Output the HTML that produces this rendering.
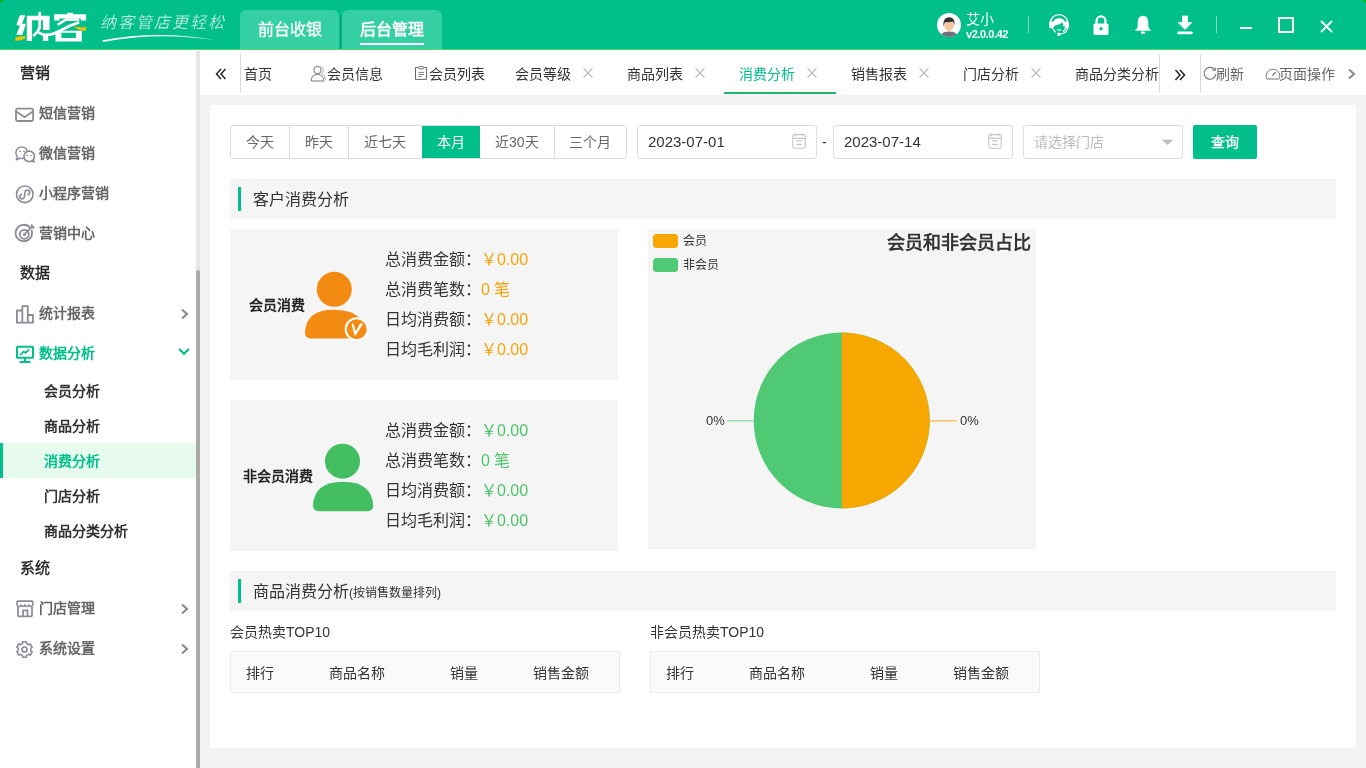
<!DOCTYPE html>
<html lang="zh-CN">
<head>
<meta charset="utf-8">
<style>
*{margin:0;padding:0;box-sizing:border-box}
html,body{width:1366px;height:768px;overflow:hidden;background:#fff;font-family:"Liberation Sans",sans-serif;color:#333}
.a{position:absolute;white-space:nowrap}
#hd{position:absolute;left:0;top:0;width:1366px;height:50px;background:#00bf8a}
#hd .line{position:absolute;left:0;top:49px;width:1366px;height:1px;background:#48dc72}
.htab{position:absolute;top:10px;height:40px;background:#34d0a3;border-radius:6px 6px 0 0;color:#fff;font-size:16px;line-height:40px;text-align:center}
#sb{position:absolute;left:0;top:50px;width:196px;height:718px;background:#fff}
#track{position:absolute;left:196px;top:51px;width:4px;height:717px;background:#e6e6e6}
#thumb{position:absolute;left:196px;top:270px;width:4px;height:498px;background:#ababab;border-radius:2px 2px 0 0}
.grp{position:absolute;left:20px;font-size:15px;font-weight:normal;color:#222;line-height:20px;-webkit-text-stroke:0.35px #222}
.mi{position:absolute;left:39px;font-size:14px;font-weight:bold;color:#666;line-height:20px}
.si{position:absolute;left:44px;font-size:14px;font-weight:bold;color:#333;line-height:20px}
.ic{position:absolute;left:14px}
.chev{position:absolute;left:178px}
#tb{position:absolute;left:200px;top:50px;width:1166px;height:45px;background:#fff}
.tt{position:absolute;top:2px;font-size:14px;line-height:45px;color:#333}
.tx{position:absolute;top:17px}
#ct{position:absolute;left:200px;top:95px;width:1166px;height:673px;background:#f4f4f4}
#panel{position:absolute;left:210px;top:105px;width:1146px;height:643px;background:#fff}
.btng{position:absolute;left:230px;top:125px;height:34px;border:1px solid #dcdcdc;border-radius:3px;display:flex;overflow:hidden}
.btng div{height:32px;line-height:32px;font-size:14px;color:#666;padding:0 15px;border-left:1px solid #dcdcdc}
.btng div:first-child{border-left:none}
.btng div.on{background:#00bf8a;color:#fff;border-left-color:#00bf8a}
.inp{position:absolute;top:125px;height:34px;border:1px solid #dcdcdc;border-radius:3px;background:#fff;font-size:14px;line-height:32px;color:#333;padding-left:11px}
.sec{position:absolute;left:230px;width:1106px;height:40px;background:#f5f5f5}
.sec .bar{position:absolute;left:8px;top:8px;width:3px;height:24px;background:#00bf8a}
.sec .t{position:absolute;left:23px;top:1px;line-height:40px;font-size:16px;color:#333}
.card{position:absolute;background:#f5f5f5}
.lab{position:absolute;left:155px;margin-top:1px;font-size:16px;color:#333;line-height:30px}
.val{color:#f5a40a}
.valg{color:#4cc56a}
.tbl{position:absolute;top:651px;width:390px;height:42px;border:1px solid #ebebeb;background:#fafafa;font-size:14px;color:#333;line-height:40px}
.tbl span{position:absolute;top:1px}
</style>
</head>
<body><div id="root" style="position:absolute;left:0;top:0;width:1366px;height:768px;will-change:transform">
<!-- HEADER -->
<div id="hd">
  <svg class="a" style="left:0;top:0" width="5" height="5"><path d="M0 0 H4 Q1 1 0 4Z" fill="#00b400"/></svg><svg class="a" style="left:1361px;top:0" width="5" height="5"><path d="M5 0 H1 Q4 1 5 4Z" fill="#00b400"/></svg>
  <svg class="a" style="left:10px;top:5px" width="90" height="45" viewBox="0 0 1366 683">
    <path d="M150 155 L232 155 L182 285 L242 285 L188 452 L95 452 L150 318 L95 300 Z" fill="#fff"/>
    <path d="M255 165 H600 V380 H500 V232 H335 V545 H255 Z" fill="#fff"/>
    <rect x="500" y="470" width="80" height="75" fill="#fff"/>
    <rect x="430" y="105" width="42" height="260" fill="#fff"/>
    <path d="M455 330 Q420 420 350 470" stroke="#fff" stroke-width="38" fill="none"/>
    <path d="M430 415 Q560 500 760 390 Q900 310 1050 262" stroke="#fff" stroke-width="42" fill="none"/>
    <path d="M670 140 H1155 V235 H1075 V205 H752 V235 H670 Z" fill="#fff"/>
    <rect x="870" y="118" width="90" height="40" fill="#fff"/>
    <path d="M722 300 L850 222 H1050" stroke="#fff" stroke-width="38" fill="none"/>
    <path d="M690 390 H1090 V555 H690 Z M780 422 V500 H1000 V422 Z" fill="#fff" fill-rule="evenodd"/>
    <path d="M80 492 Q150 468 235 475 L228 512 Q150 538 82 546 Z" fill="#f5c000"/>
    <path d="M965 318 Q1060 352 1157 333 L1148 392 Q1050 398 965 318 Z" fill="#f5c000"/>
  </svg>
  <div class="a" style="left:100px;top:12px;font-family:'Liberation Serif',serif;font-size:16px;color:#fff;line-height:22px;letter-spacing:2px;font-style:italic;-webkit-text-stroke:0.35px #00bf8a">纳客管店更轻松</div>
  <svg class="a" style="left:95px;top:28px" width="135" height="18" viewBox="95 28 135 18"><path d="M102.5 40.2 Q160 29.4 219.5 40.9 Q160 31.2 102.8 41.9 Z" fill="#fff"/></svg>
  <div class="htab" style="left:240px;width:99px;-webkit-text-stroke:0.3px #fff">前台收银</div>
  <div class="a" style="left:339.5px;top:15px;width:2.5px;height:35px;background:#06a87c;filter:blur(0.4px)"></div>
  <div class="htab" style="left:342px;width:100px;font-weight:bold">后台管理<div style="position:absolute;left:18px;top:33px;width:64px;height:2px;background:#fff"></div></div>
  <div class="line"></div>
  <!-- avatar -->
  <svg class="a" style="left:937px;top:13px" width="24" height="24" viewBox="0 0 24 24">
    <circle cx="12" cy="12" r="12" fill="#fff"/>
    <clipPath id="cp"><circle cx="12" cy="12" r="12"/></clipPath>
    <g clip-path="url(#cp)">
      <path d="M2.5 24.5 Q3.6 18.4 12 18.4 Q20.4 18.4 21.5 24.5Z" fill="#70707f"/>
      <rect x="10.4" y="15.6" width="3.2" height="3.2" fill="#f3c39c"/>
      <ellipse cx="12" cy="12.4" rx="4.8" ry="5" fill="#f6c79e"/>
      <path d="M6.6 13.6 Q5.4 4.4 12 4.2 Q18.6 4.4 17.4 12.6 Q17 9.4 15.6 8.6 Q12 9.8 8.2 8.9 Q7 10.4 6.6 13.6Z" fill="#333"/>
    </g>
  </svg>
  <div class="a" style="left:966px;top:10px;font-size:14px;color:#fff;line-height:18px">艾小</div>
  <div class="a" style="left:966px;top:27px;font-size:11px;font-weight:bold;color:#fff;line-height:14px;letter-spacing:-0.45px">v2.0.0.42</div>
  <div class="a" style="left:1028px;top:16px;width:1px;height:17px;background:rgba(255,255,255,.5)"></div>
  <div class="a" style="left:1216px;top:16px;width:1px;height:17px;background:rgba(255,255,255,.5)"></div>
  <svg class="a" style="left:1044px;top:10px" width="30" height="30" viewBox="1044 10 30 30">
    <path d="M1050.1 23.5 A8.9 8.9 0 0 1 1067.9 23.5" stroke="#fff" stroke-width="1.3" fill="none"/>
    <rect x="1049.2" y="21.6" width="4" height="6.6" rx="1.2" fill="#fff"/>
    <rect x="1065" y="21.6" width="4" height="6.6" rx="1.2" fill="#fff"/>
    <path d="M1052.6 26.5 Q1052.2 18.2 1059 18.3 Q1066 18.2 1065.6 26.5 L1063.4 26.5 Q1063.2 23.5 1062 22.2 Q1060.5 24.6 1055.5 25.2 Q1054 25.8 1054.2 27 Z" fill="#fff"/>
    <path d="M1052.6 27.5 Q1053.6 31 1056 32.2 M1065.6 27.5 Q1064.6 30.8 1063 31.6" stroke="#fff" stroke-width="1.2" fill="none"/>
    <path d="M1057.3 29.5 Q1059.2 30.7 1061.2 29.5" stroke="#fff" stroke-width="1.1" fill="none"/>
    <path d="M1067.6 28 Q1066.8 33.6 1059.5 34.2" stroke="#fff" stroke-width="1.3" fill="none"/>
    <circle cx="1058.8" cy="34.2" r="1.7" fill="#fff"/>
  </svg>
  <svg class="a" style="left:1093px;top:15px" width="16" height="20" viewBox="0 0 16 20">
    <path d="M3.6 9 V5.8 A4.4 4.4 0 0 1 12.4 5.8 V9" stroke="#fff" stroke-width="2.3" fill="none"/>
    <rect x="0.5" y="8.5" width="15" height="11.5" rx="1.5" fill="#fff"/>
    <circle cx="8" cy="13.8" r="1.7" fill="#00bf8a"/>
  </svg>
  <svg class="a" style="left:1135px;top:15px" width="16" height="19" viewBox="0 0 16 19">
    <path d="M8 0.8 Q13 0.8 13.2 7 L13.5 12 Q14 14 15.8 15 L15.8 15.8 L0.2 15.8 L0.2 15 Q2 14 2.5 12 L2.8 7 Q3 0.8 8 0.8Z" fill="#fff"/>
    <rect x="5.8" y="16.5" width="4.4" height="2.2" rx="1" fill="#fff"/>
  </svg>
  <svg class="a" style="left:1177px;top:15px" width="16" height="20" viewBox="0 0 16 20">
    <path d="M5.5 1 H10.5 V7.5 H14.8 L8 14.5 L1.2 7.5 H5.5Z" fill="#fff" stroke="#fff" stroke-width="0.8" stroke-linejoin="round"/>
    <rect x="0.3" y="16.4" width="15.4" height="2.8" rx="1.2" fill="#fff"/>
  </svg>
  <div class="a" style="left:1240px;top:27px;width:12px;height:2px;background:#fff"></div>
  <div class="a" style="left:1278px;top:17px;width:16px;height:16px;border:2px solid #fdfde8"></div>
  <svg class="a" style="left:1320px;top:20px" width="13" height="13" viewBox="0 0 13 13"><path d="M1 1 L12 12 M12 1 L1 12" stroke="#fff" stroke-width="1.8"/></svg>
</div>


<!-- SIDEBAR -->
<div id="sb"></div>
<div id="track"></div>
<div id="thumb"></div>
<div class="grp" style="top:63px">营销</div>
<div class="mi" style="top:103px">短信营销</div>
<div class="mi" style="top:143px">微信营销</div>
<div class="mi" style="top:183px">小程序营销</div>
<div class="mi" style="top:223px">营销中心</div>
<div class="grp" style="top:263px">数据</div>
<div class="mi" style="top:303px">统计报表</div>
<div class="mi" style="top:343px;color:#00bf8a">数据分析</div>
<div class="si" style="top:381px">会员分析</div>
<div class="si" style="top:416px">商品分析</div>
<div class="a" style="left:0;top:443px;width:196px;height:35px;background:#e6fbee"></div>
<div class="a" style="left:0;top:443px;width:3px;height:35px;background:#00bf8a"></div>
<div class="si" style="top:451px;color:#00bf8a">消费分析</div>
<div class="si" style="top:486px">门店分析</div>
<div class="si" style="top:521px">商品分类分析</div>
<div class="grp" style="top:558px">系统</div>
<div class="mi" style="top:598px">门店管理</div>
<div class="mi" style="top:638px">系统设置</div>


<svg class="a" style="left:12px;top:104px" width="26" height="22" viewBox="12 104 26 22"><rect x="16" y="108.6" width="17.1" height="12.4" rx="1.5" stroke="#8b8b98" stroke-width="1.8" fill="none"/><path d="M16.3 111.6 L24.6 117.2 L32.8 111.6" stroke="#8b8b98" stroke-width="1.8" fill="none" stroke-linejoin="round"/></svg>
<svg class="a" style="left:12px;top:142px" width="26" height="24" viewBox="12 142 26 24"><circle cx="21.7" cy="152.7" r="5.75" stroke="#8b8b98" stroke-width="1.6" fill="#fff"/><path d="M17.6 156.6 L16.2 159.9 L20.4 158.3" stroke="#8b8b98" stroke-width="1.4" fill="#fff" stroke-linejoin="round"/><circle cx="21.7" cy="152.7" r="4.95" fill="#fff"/><path d="M19.3 151.4 H20.9 M23.2 151.4 H24.8" stroke="#8b8b98" stroke-width="1.4"/><path d="M32.6 159.8 L34.6 161.9 L30.8 161.2" stroke="#8b8b98" stroke-width="1.4" fill="#fff" stroke-linejoin="round"/><circle cx="29.2" cy="156.4" r="5.25" stroke="#8b8b98" stroke-width="1.6" fill="#fff"/><path d="M26.6 155.6 H28 M30.4 155.6 H31.8" stroke="#8b8b98" stroke-width="1.4"/></svg>
<svg class="a" style="left:12px;top:182px" width="26" height="26" viewBox="12 182 26 26"><circle cx="24.8" cy="194.3" r="8.3" stroke="#8b8b98" stroke-width="1.6" fill="none"/><path d="M22.1 194.2 A2.3 2.3 0 1 0 24.4 196.5 L25.1 192.3 A2.3 2.3 0 1 1 27.4 194.6" stroke="#8b8b98" stroke-width="1.6" fill="none"/></svg>
<svg class="a" style="left:12px;top:222px" width="26" height="24" viewBox="12 222 26 24"><path d="M30.2 227.8 A8.2 8.2 0 1 0 31.4 229.8" stroke="#8b8b98" stroke-width="1.8" fill="none"/><circle cx="24.3" cy="234.3" r="4.5" stroke="#8b8b98" stroke-width="1.8" fill="none"/><circle cx="24.3" cy="234.4" r="1.5" fill="#8b8b98"/><path d="M24.3 234.4 L31.6 227.1" stroke="#8b8b98" stroke-width="1.8"/><path d="M31 225.2 L32 224.6 L32.8 226.4 L34.4 227 L33.6 228.2 L31.6 227.6 Z" fill="#8b8b98" stroke="#8b8b98" stroke-width="1"/></svg>
<svg class="a" style="left:12px;top:302px" width="26" height="24" viewBox="12 302 26 24"><path d="M16.9 322.7 V310.5 H22.3 V306.1 H27.8 V315 H33 V322.7 Z M22.3 310.5 V322.7 M27.8 315 V322.7" stroke="#8b8b98" stroke-width="1.8" fill="none" stroke-linejoin="round"/></svg>
<svg class="a" style="left:12px;top:342px" width="26" height="24" viewBox="12 342 26 24"><rect x="17" y="346.8" width="16" height="11" rx="0.6" stroke="#00bf8a" stroke-width="2" fill="none"/><path d="M25 358 V361.6 M20.3 362.1 H29.7" stroke="#00bf8a" stroke-width="2" stroke-linecap="round"/><path d="M20.6 354.6 L23.6 351.5 L25.6 352.8 L28.6 349.8" stroke="#00bf8a" stroke-width="1.7" fill="none" stroke-linecap="round"/></svg>
<svg class="a" style="left:12px;top:596px" width="26" height="26" viewBox="12 596 26 26"><path d="M17 604.8 V602.2 Q17 601.1 18.1 601.1 H31.8 Q32.9 601.1 32.9 602.2 V604.8 A1.99 1.7 0 0 1 28.93 604.8 A1.99 1.7 0 0 1 24.95 604.8 A1.99 1.7 0 0 1 20.98 604.8 A1.99 1.7 0 0 1 17 604.8 Z" stroke="#8b8b98" stroke-width="1.6" fill="none" stroke-linejoin="round"/><path d="M18 606.6 V615.6 Q18 616.4 18.8 616.4 H31.2 Q32 616.4 32 615.6 V606.6" stroke="#8b8b98" stroke-width="1.7" fill="none" stroke-linejoin="round"/><path d="M23.1 616.2 V610.4 H27.5 V616.2" stroke="#8b8b98" stroke-width="1.7" fill="none"/></svg>
<svg class="a" style="left:12px;top:638px" width="26" height="24" viewBox="12 638 26 24"><path d="M22.56 641.74 L26.44 641.74 L26.48 643.41 L28.78 644.74 L30.25 643.94 L32.19 647.29 L30.76 648.17 L30.76 650.83 L32.19 651.71 L30.25 655.06 L28.78 654.26 L26.48 655.59 L26.44 657.26 L22.56 657.26 L22.52 655.59 L20.22 654.26 L18.75 655.06 L16.81 651.71 L18.24 650.83 L18.24 648.17 L16.81 647.29 L18.75 643.94 L20.22 644.74 L22.52 643.41Z" stroke="#8b8b98" stroke-width="1.6" fill="none" stroke-linejoin="round"/><circle cx="24.5" cy="649.5" r="2.5" stroke="#8b8b98" stroke-width="1.7" fill="none"/></svg>
<svg class="a" style="left:180px;top:308px" width="9" height="12" viewBox="0 0 9 12"><path d="M2 1.5 L7 6 L2 10.5" stroke="#8b8b98" stroke-width="2.2" fill="none"/></svg>
<svg class="a" style="left:178px;top:347px" width="12" height="9" viewBox="0 0 12 9"><path d="M1.2 2 L6 6.8 L10.8 2" stroke="#00bf8a" stroke-width="2.2" fill="none"/></svg>
<svg class="a" style="left:180px;top:603px" width="9" height="12" viewBox="0 0 9 12"><path d="M2 1.5 L7 6 L2 10.5" stroke="#8b8b98" stroke-width="2.2" fill="none"/></svg>
<svg class="a" style="left:180px;top:643px" width="9" height="12" viewBox="0 0 9 12"><path d="M2 1.5 L7 6 L2 10.5" stroke="#8b8b98" stroke-width="2.2" fill="none"/></svg>

<!-- TABBAR -->
<div id="tb"></div>
<svg class="a" style="left:215px;top:68px" width="12" height="12" viewBox="0 0 12 12"><path d="M6 1 L1.5 6 L6 11 M10.5 1 L6 6 L10.5 11" stroke="#222" stroke-width="1.5" fill="none"/></svg>
<div class="a" style="left:240px;top:53px;width:1px;height:40px;background:#d9d9d9"></div>
<div class="a" style="left:241px;top:50px;width:918px;height:45px;overflow:hidden">
  <div class="tt" style="left:3px">首页</div>
  <svg class="a" style="left:69px;top:14px" width="18" height="18" viewBox="69 14 18 18"><circle cx="76.5" cy="20" r="3.7" stroke="#777" stroke-width="1" fill="none"/><path d="M70.2 31 Q70.4 24.6 76.5 24.4 Q82.6 24.6 82.8 31 Z" stroke="#777" stroke-width="1" fill="none" stroke-linejoin="round"/><path d="M80 16.3 Q82.6 17.4 82.2 21.2 Q81.6 23 80.6 23.6 Q84.4 25 84.6 29.8" stroke="#aaa" stroke-width="0.9" fill="none"/></svg>
  <div class="tt" style="left:86px">会员信息</div>
  <svg class="a" style="left:172px;top:15px" width="16" height="17" viewBox="172 15 16 17"><path d="M174.5 17.4 V29.4 H185.6 V17.4 H182.8 M177.3 17.4 H174.5" stroke="#666" stroke-width="1" fill="none"/><path d="M177.3 17.4 L178.3 16.4 H182 L182.8 17.4 L182.2 18.8 H178 Z" stroke="#666" stroke-width="0.9" fill="none" stroke-linejoin="round"/><path d="M177.3 22.4 H183 M177.3 24.5 H183 M177.3 26.6 H180.5" stroke="#777" stroke-width="0.9"/></svg>
  <div class="tt" style="left:188px">会员列表</div>
  <div class="tt" style="left:274px">会员等级</div>
  <div class="tt" style="left:386px">商品列表</div>
  <div class="tt" style="left:498px;color:#00bf8a">消费分析</div>
  <div class="a" style="left:483px;top:42px;width:112px;height:2px;background:#1cb76a"></div>
  <div class="tt" style="left:610px">销售报表</div>
  <div class="tt" style="left:722px">门店分析</div>
  <div class="tt" style="left:834px">商品分类分析</div>
  <svg class="a" style="left:342px;top:18px" width="10" height="10" viewBox="0 0 10 10"><path d="M0.5 0.5 L9.5 9.5 M9.5 0.5 L0.5 9.5" stroke="#bbb" stroke-width="1.1"/></svg>
<svg class="a" style="left:454px;top:18px" width="10" height="10" viewBox="0 0 10 10"><path d="M0.5 0.5 L9.5 9.5 M9.5 0.5 L0.5 9.5" stroke="#bbb" stroke-width="1.1"/></svg>
<svg class="a" style="left:566px;top:18px" width="10" height="10" viewBox="0 0 10 10"><path d="M0.5 0.5 L9.5 9.5 M9.5 0.5 L0.5 9.5" stroke="#bbb" stroke-width="1.1"/></svg>
<svg class="a" style="left:678px;top:18px" width="10" height="10" viewBox="0 0 10 10"><path d="M0.5 0.5 L9.5 9.5 M9.5 0.5 L0.5 9.5" stroke="#bbb" stroke-width="1.1"/></svg>
<svg class="a" style="left:790px;top:18px" width="10" height="10" viewBox="0 0 10 10"><path d="M0.5 0.5 L9.5 9.5 M9.5 0.5 L0.5 9.5" stroke="#bbb" stroke-width="1.1"/></svg>

</div>
<div class="a" style="left:1159px;top:54px;width:1px;height:39px;background:#d9d9d9"></div>
<svg class="a" style="left:1174px;top:69px" width="12" height="12" viewBox="0 0 12 12"><path d="M1.5 1 L6 6 L1.5 11 M6 1 L10.5 6 L6 11" stroke="#222" stroke-width="1.5" fill="none"/></svg>
<div class="a" style="left:1200px;top:54px;width:1px;height:39px;background:#d9d9d9"></div>
<svg class="a" style="left:1202px;top:66px" width="16" height="16" viewBox="1202 66 16 16"><path d="M1214.6 69.6 A5.9 5.9 0 1 0 1215.9 73.8" stroke="#777" stroke-width="1.1" fill="none"/><path d="M1212 70.3 L1215.3 70.3 L1215.3 67.4" stroke="#777" stroke-width="1.1" fill="none"/></svg>
<div class="tt" style="left:1216px;top:52px;color:#666">刷新</div>
<svg class="a" style="left:1264px;top:66px" width="18" height="16" viewBox="1264 66 18 16"><path d="M1266.9 79 A6.8 6.8 0 1 1 1279.1 79 Z" stroke="#777" stroke-width="1" fill="none"/><path d="M1266.9 79 H1279.1" stroke="#bbb" stroke-width="1.2"/><path d="M1272.3 75.6 L1275.6 72.2" stroke="#666" stroke-width="1.1"/></svg>
<div class="tt" style="left:1279px;top:52px;color:#666">页面操作</div>
<svg class="a" style="left:1347px;top:68px" width="9" height="12" viewBox="0 0 9 12"><path d="M2 1.5 L7 6 L2 10.5" stroke="#888" stroke-width="2" fill="none"/></svg>


<!-- CONTENT -->
<div id="ct"></div>
<div id="panel"></div>

<div class="a" style="left:230px;top:125px;width:397px;height:34px;border:1px solid #dcdcdc;border-radius:3px;background:#fff"></div>
<div class="a" style="left:231.0px;top:126px;width:58.3px;height:32px;line-height:32px;text-align:center;font-size:14px;color:#666;">今天</div>
<div class="a" style="left:289.3px;top:126px;width:59.0px;height:32px;line-height:32px;text-align:center;font-size:14px;color:#666;">昨天</div>
<div class="a" style="left:289.3px;top:126px;width:1px;height:32px;background:#dcdcdc"></div>
<div class="a" style="left:348.3px;top:126px;width:73.3px;height:32px;line-height:32px;text-align:center;font-size:14px;color:#666;">近七天</div>
<div class="a" style="left:348.3px;top:126px;width:1px;height:32px;background:#dcdcdc"></div>
<div class="a" style="left:421.6px;top:126px;width:58.4px;height:32px;line-height:32px;text-align:center;font-size:14px;background:#00bf8a;color:#fff;">本月</div>
<div class="a" style="left:480.0px;top:126px;width:73.6px;height:32px;line-height:32px;text-align:center;font-size:14px;color:#666;">近30天</div>
<div class="a" style="left:553.6px;top:126px;width:72.7px;height:32px;line-height:32px;text-align:center;font-size:14px;color:#666;">三个月</div>
<div class="a" style="left:553.6px;top:126px;width:1px;height:32px;background:#dcdcdc"></div>

<div class="inp" style="left:637px;width:180px;font-size:15px;padding-left:10px">2023-07-01</div>
<div class="a" style="left:822px;top:132px;font-size:14px;line-height:20px;color:#333">-</div>
<div class="inp" style="left:833px;width:180px;font-size:15px;padding-left:10px">2023-07-14</div>
<div class="inp" style="left:1023px;width:160px;color:#bbb;padding-left:10px">请选择门店</div>
<svg class="a" style="left:790.2px;top:131px" width="18" height="20" viewBox="790 131 18 20" ><g stroke="#c8c8c8" fill="none" stroke-width="1.1"><rect x="792.8" y="134.6" width="12.4" height="13.6" rx="1.2"/><path d="M792.8 138.4 H805.2 M795.4 133.2 V136.2 M802.5 133.2 V136.2"/><path d="M796.2 140.9 H801.8 M796.2 144.5 H801.8" stroke-width="1.3"/></g></svg>
<svg class="a" style="left:985.8px;top:131px" width="18" height="20" viewBox="790 131 18 20" ><g stroke="#c8c8c8" fill="none" stroke-width="1.1"><rect x="792.8" y="134.6" width="12.4" height="13.6" rx="1.2"/><path d="M792.8 138.4 H805.2 M795.4 133.2 V136.2 M802.5 133.2 V136.2"/><path d="M796.2 140.9 H801.8 M796.2 144.5 H801.8" stroke-width="1.3"/></g></svg>
<svg class="a" style="left:1161px;top:139px" width="13" height="7" viewBox="0 0 13 7"><path d="M0.7 0.7 H12.3 L6.5 5.9 Z" fill="#bdbdbd"/></svg>
<div class="a" style="left:1193px;top:125px;width:64px;height:34px;background:#00bf8a;border-radius:2px;color:#fff;font-size:14px;line-height:34px;text-align:center;-webkit-text-stroke:0.3px #fff">查询</div>

<div class="sec" style="top:179px"><div class="bar"></div><div class="t">客户消费分析</div></div>

<div class="card" style="left:230px;top:229px;width:388px;height:151px">
  <div class="a" style="left:19px;top:66px;font-size:14px;font-weight:bold;color:#222;line-height:20px">会员消费</div>
  <div class="lab" style="top:15px">总消费金额：<span class="val">￥0.00</span></div>
  <div class="lab" style="top:45px">总消费笔数：<span class="val">0 笔</span></div>
  <div class="lab" style="top:75px">日均消费额：<span class="val">￥0.00</span></div>
  <div class="lab" style="top:105px">日均毛利润：<span class="val">￥0.00</span></div>
</div>
<div class="card" style="left:230px;top:400px;width:388px;height:151px">
  <div class="a" style="left:13px;top:66px;font-size:14px;font-weight:bold;color:#222;line-height:20px">非会员消费</div>
  <div class="lab" style="top:15px">总消费金额：<span class="valg">￥0.00</span></div>
  <div class="lab" style="top:45px">总消费笔数：<span class="valg">0 笔</span></div>
  <div class="lab" style="top:75px">日均消费额：<span class="valg">￥0.00</span></div>
  <div class="lab" style="top:105px">日均毛利润：<span class="valg">￥0.00</span></div>
</div>
<div class="card" style="left:648px;top:229px;width:388px;height:320px"></div>


<svg class="a" style="left:300px;top:268px" width="70" height="75" viewBox="300 268 70 75">
  <circle cx="334.3" cy="289.3" r="17.5" fill="#f38b12"/>
  <path d="M305 333 Q306 309.8 333 309.8 Q354 309.8 361 320 L352 338.5 L311 338.5 Q305 338 305 333Z" fill="#f38b12"/>
  <circle cx="356.7" cy="329.2" r="12" fill="#fff"/>
  <circle cx="356.7" cy="329.2" r="10" fill="#f38b12"/>
  <path d="M351.6 324 Q352.6 323.2 353.6 324 L355.9 331.2 L360 323.4 H363.2 L355.8 335.3 H354.4 Z" fill="#fff"/>
</svg>
<svg class="a" style="left:310px;top:440px" width="70" height="75" viewBox="310 440 70 75">
  <circle cx="342.5" cy="461.2" r="17.5" fill="#42be60"/>
  <path d="M313 505.5 Q314 482 343 481.8 Q372 482 373.2 505.5 Q373.2 511.2 367 511.2 L319 511.2 Q313 511.2 313 505.5Z" fill="#42be60"/>
</svg>
<svg class="a" style="left:648px;top:229px" width="388" height="320" viewBox="648 229 388 320">
  <circle cx="841.7" cy="420.5" r="88" fill="#50c974"/>
  <path d="M841.7 332.5 A88 88 0 0 1 841.7 508.5 Z" fill="#f6a800"/>
  <path d="M929.7 420.8 H957" stroke="#f6c56a" stroke-width="1.5"/>
  <path d="M727 420.8 H753.7" stroke="#93dcaa" stroke-width="1.5"/>
  <rect x="653" y="234" width="25" height="14" rx="3.5" fill="#f6a800"/>
  <rect x="653" y="258" width="25" height="14" rx="3.5" fill="#50c974"/>
</svg>
<div class="a" style="left:683px;top:233px;font-size:12px;line-height:16px;color:#333">会员</div>
<div class="a" style="left:683px;top:257px;font-size:12px;line-height:16px;color:#333">非会员</div>
<div class="a" style="left:887px;top:232px;font-size:18px;font-weight:bold;line-height:22px;color:#333">会员和非会员占比</div>
<div class="a" style="left:706px;top:412px;font-size:13px;line-height:18px;color:#333">0%</div>
<div class="a" style="left:960px;top:412px;font-size:13px;line-height:18px;color:#333">0%</div>

<div class="sec" style="top:571px"><div class="bar"></div><div class="t">商品消费分析<span style="font-size:12px">(按销售数量排列)</span></div></div>
<div class="a" style="left:230px;top:622px;font-size:14px;line-height:20px;color:#333">会员热卖TOP10</div>
<div class="a" style="left:650px;top:622px;font-size:14px;line-height:20px;color:#333">非会员热卖TOP10</div>
<div class="tbl" style="left:230px"><span style="left:15px">排行</span><span style="left:98px">商品名称</span><span style="left:219px">销量</span><span style="left:302px">销售金额</span></div>
<div class="tbl" style="left:650px"><span style="left:15px">排行</span><span style="left:98px">商品名称</span><span style="left:219px">销量</span><span style="left:302px">销售金额</span></div>
</div></body>
</html>
